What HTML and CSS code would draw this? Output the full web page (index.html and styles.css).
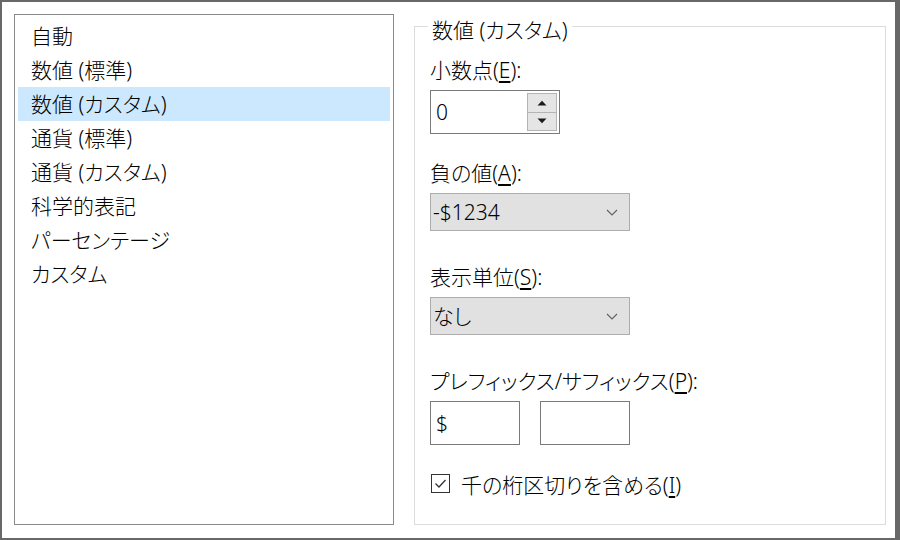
FILE: index.html
```html
<!DOCTYPE html>
<html lang="ja">
<head>
<meta charset="utf-8">
<title>数値の書式</title>
<link rel="stylesheet" href="styles.css">
</head>
<body>
<div class="frame">
  <div class="layout">
    <ul class="list">
      <li class="item">自動</li>
      <li class="item">数値 (標準)</li>
      <li class="item selected">数値 (カスタム)</li>
      <li class="item">通貨 (標準)</li>
      <li class="item">通貨 (カスタム)</li>
      <li class="item">科学的表記</li>
      <li class="item">パーセンテージ</li>
      <li class="item">カスタム</li>
    </ul>
    <div class="group">
      <div class="legend">数値 (カスタム)</div>

      <div class="field field-spin">
        <div class="label">小数点(<u>E</u>):</div>
        <div class="spinbox">
          <span class="spin-value">0</span>
          <div class="spin-buttons">
            <div class="spin-btn"><svg width="10" height="6" viewBox="0 0 10 6"><path d="M0.5 5.5 L5 0.8 L9.5 5.5 Z" fill="#1a1a1a"/></svg></div>
            <div class="spin-btn"><svg width="10" height="6" viewBox="0 0 10 6"><path d="M0.5 0.5 L5 5.2 L9.5 0.5 Z" fill="#1a1a1a"/></svg></div>
          </div>
        </div>
      </div>

      <div class="field">
        <div class="label">負の値(<u>A</u>):</div>
        <div class="select">
          <span class="select-value">-$1234</span>
          <svg class="chevron" width="12" height="7" viewBox="0 0 12 7"><path d="M1 1 L6 6 L11 1" fill="none" stroke="#606060" stroke-width="1.1"/></svg>
        </div>
      </div>

      <div class="field">
        <div class="label">表示単位(<u>S</u>):</div>
        <div class="select">
          <span class="select-value">なし</span>
          <svg class="chevron" width="12" height="7" viewBox="0 0 12 7"><path d="M1 1 L6 6 L11 1" fill="none" stroke="#606060" stroke-width="1.1"/></svg>
        </div>
      </div>

      <div class="field field-prefix">
        <div class="label">プレフィックス/サフィックス(<u>P</u>):</div>
        <div class="inputs">
          <div class="textbox">$</div>
          <div class="textbox"></div>
        </div>
      </div>

      <div class="check-row">
        <span class="checkbox"><svg width="17" height="17" viewBox="0 0 17 17"><path d="M3.5 8.5 L7 12 L13.5 5" fill="none" stroke="#333" stroke-width="1.3"/></svg></span>
        <span class="check-label">千の桁区切りを含める(<u>I</u>)</span>
      </div>
    </div>
  </div>
</div>
</body>
</html>
```
FILE: styles.css
```css
* { box-sizing: border-box; }

html, body {
  margin: 0;
  padding: 0;
  background: #ffffff;
}

body {
  font-family: "Noto Sans", "Noto Sans CJK JP", sans-serif;
  font-size: 21px;
  font-weight: 300;
  color: #000000;
  font-feature-settings: "palt";
}

.frame {
  width: 900px;
  height: 540px;
  border-style: solid;
  border-color: #686868;
  border-width: 2px 5px 2px 2px;
  background: #ffffff;
}

.layout {
  height: 100%;
  display: grid;
  grid-template-columns: 380px 1fr;
  column-gap: 20px;
  padding: 12px 9px 13px 12px;
}

.list {
  list-style: none;
  margin: 0;
  padding: 4px 3px;
  border: 1px solid #8a8a8a;
}

.item {
  height: 34px;
  line-height: 34px;
  padding-left: 13px;
  white-space: nowrap;
}

.item.selected {
  background: #cce8ff;
}

.group {
  margin-top: 12px;
  border: 1px solid #dcdcdc;
  padding: 0 15px;
}

.legend {
  width: fit-content;
  margin-top: -11px;
  margin-bottom: 12px;
  margin-left: -2px;
  padding: 0 4px;
  height: 28px;
  line-height: 28px;
  background: #ffffff;
}

.field {
  margin-bottom: 32px;
}

.label {
  height: 28px;
  line-height: 28px;
  margin-bottom: 6px;
  white-space: nowrap;
}

.label u, .check-label u {
  text-underline-offset: 3px;
}

.field-spin {
  margin-bottom: 25px;
}

.field-prefix {
  margin-bottom: 26px;
}

.spinbox {
  width: 130px;
  height: 44px;
  border: 1px solid #7a7a7a;
  display: flex;
  align-items: stretch;
  padding: 2px 2px 2px 5px;
}

.spin-value {
  flex: 1;
  line-height: 38px;
}

.spin-buttons {
  width: 30px;
  display: flex;
  flex-direction: column;
}

.spin-btn {
  flex: 1;
  background: #e5e5e5;
  border: 1px solid #b4b4b4;
  display: flex;
  align-items: center;
  justify-content: center;
}

.spin-btn + .spin-btn {
  border-top: none;
}

.select {
  width: 200px;
  height: 38px;
  background: #e1e1e1;
  border: 1px solid #adadad;
  display: flex;
  align-items: center;
  justify-content: space-between;
  padding: 0 11px 0 2px;
}

.select-value {
  line-height: 36px;
}

.chevron {
  display: block;
}

.inputs {
  display: flex;
  gap: 20px;
}

.textbox {
  width: 90px;
  height: 44px;
  border: 1px solid #7a7a7a;
  line-height: 42px;
  padding-left: 5px;
}

.check-row {
  display: flex;
  align-items: center;
  height: 28px;
  padding-left: 1px;
}

.checkbox {
  width: 19px;
  height: 19px;
  border: 1px solid #333333;
  display: flex;
  align-items: center;
  justify-content: center;
  margin-right: 11px;
  margin-top: -4px;
}

.check-label {
  line-height: 28px;
  white-space: nowrap;
}
```
